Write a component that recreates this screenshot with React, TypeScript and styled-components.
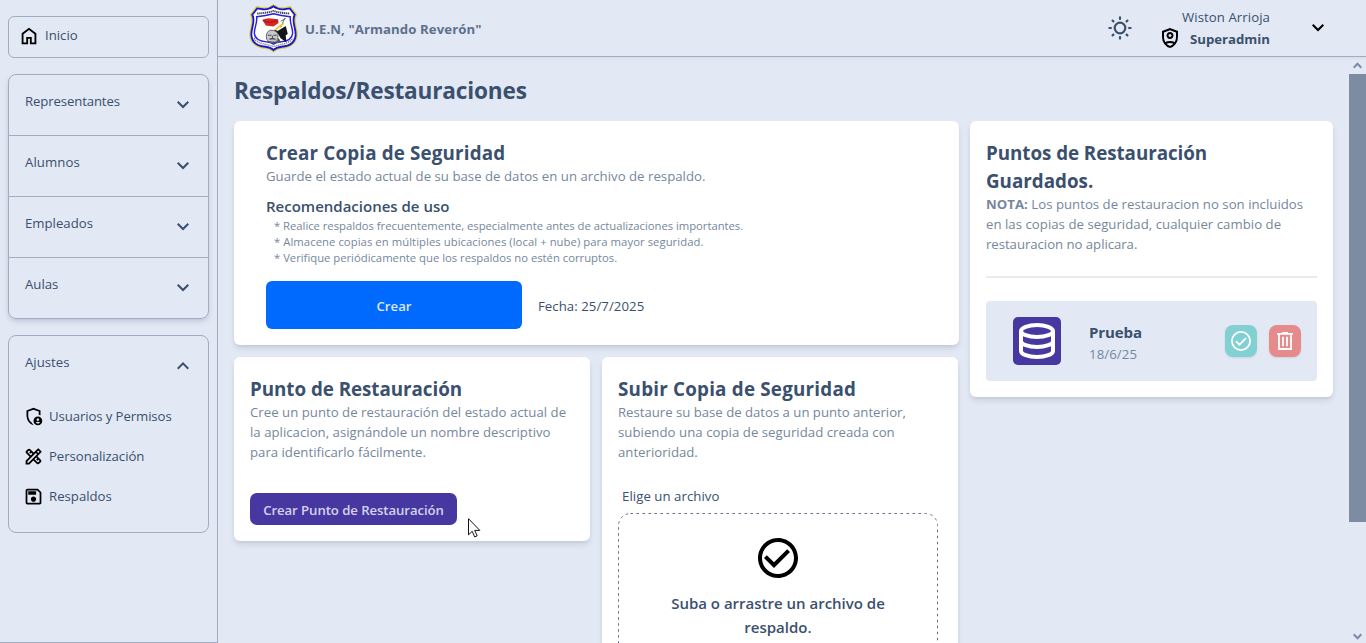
import React from "react";
import styled, { createGlobalStyle } from "styled-components";
import { MdCheckCircleOutline, MdOutlineDesignServices, MdOutlineSave } from "react-icons/md";

const color = {
  page: "#e2e8f4",
  ink: "#3a506e",
  muted: "#76879c",
  line: "#a3adc2",
  indigo: "#4638a0",
  blue: "#006aff",
};

const GlobalStyle = createGlobalStyle`
  * { box-sizing: border-box; margin: 0; padding: 0; }
  body {
    background: ${color.page};
    color: ${color.ink};
    font-family: "Open Sans", "Noto Sans", sans-serif;
    font-size: 13.2px;
    line-height: 20px;
    overflow: hidden;
  }
  svg { display: block; flex: none; }
  button { font: inherit; border: 0; }
`;

type Tracking = { $track?: number };

const Shell = styled.div`
  display: flex;
  height: 643px;
  position: relative;
`;

const Sidebar = styled.nav`
  display: flex;
  flex-direction: column;
  gap: 16px;
  width: 218px;
  padding: 16px 8px 0;
  border-right: 1px solid ${color.line};
  border-bottom: 1px solid ${color.line};
`;

const NavLabel = styled.span<Tracking>`
  letter-spacing: ${(p) => p.$track ?? 0}px;
  white-space: nowrap;
`;

const HomeLink = styled.a`
  display: flex;
  gap: 5px;
  height: 42px;
  padding: 8px 9px;
  border: 1px solid ${color.line};
  border-radius: 6px;
`;

const NavGroup = styled.div<{ $raised?: boolean }>`
  border: 1px solid ${color.line};
  border-radius: 8px;
  overflow: hidden;
  box-shadow: ${(p) => (p.$raised ? "0 3px 6px -1px rgba(40,50,80,.16), 0 2px 4px -2px rgba(40,50,80,.1)" : "none")};
`;

const NavRow = styled.div`
  display: flex;
  justify-content: space-between;
  height: 60px;
  padding: 16px 13px 0 16px;
  svg { margin-top: 2px; }
  & + & { height: 61px; border-top: 1px solid ${color.line}; }
`;

const SubList = styled.ul`
  list-style: none;
  padding: 0 14px 16px;
`;

const SubItem = styled.li`
  display: flex;
  align-items: center;
  gap: 5px;
  height: 40px;
  svg { color: #000; }
`;

const Column = styled.div`
  flex: 1;
  display: flex;
  flex-direction: column;
  min-width: 0;
`;

const Header = styled.header`
  display: flex;
  align-items: center;
  height: 57px;
  padding: 0 36px 0 31px;
  border-bottom: 1px solid ${color.line};
  box-shadow: 0 1px 3px rgba(40, 50, 80, 0.08);
`;

const School = styled.strong<Tracking>`
  margin: 2px auto 0 7px;
  color: #5d718d;
  letter-spacing: ${(p) => p.$track ?? 0}px;
`;

const User = styled.div`
  display: flex;
  flex-direction: column;
  align-items: flex-end;
  margin: 0 36px 0 26px;
  line-height: 22px;
`;

const Role = styled.div`
  display: flex;
  gap: 8px;
  height: 22px;
  svg { margin-top: -2px; }
`;

const Scroller = styled.div`
  flex: 1;
  display: flex;
  min-height: 0;
  overflow: hidden;
`;

const Main = styled.main`
  flex: 1;
  padding: 16px;
  overflow: hidden;
`;

const PageTitle = styled.h1<Tracking>`
  padding-top: 2px;
  margin-bottom: 14px;
  font-size: 22.6px;
  line-height: 32px;
  letter-spacing: ${(p) => p.$track ?? 0}px;
`;

const Columns = styled.div`
  display: flex;
  align-items: flex-start;
  gap: 11px;
`;

const Primary = styled.div`
  display: grid;
  grid-template-columns: 356px 356px;
  gap: 12px;
  width: 725px;
  align-items: start;
`;

const Card = styled.section<{ $wide?: boolean; $side?: boolean }>`
  grid-column: ${(p) => (p.$wide ? "1 / -1" : "auto")};
  width: ${(p) => (p.$wide ? "725px" : p.$side ? "363px" : "auto")};
  padding: ${(p) => (p.$wide ? "16px 32px" : "16px")};
  background: #fff;
  border-radius: 6px;
  box-shadow: 0 4px 6px -1px rgba(30, 40, 70, 0.12), 0 2px 4px -2px rgba(30, 40, 70, 0.12);
`;

const CardTitle = styled.h2<Tracking>`
  padding-top: 2px;
  margin-bottom: -1px;
  font-size: 18.8px;
  line-height: 28px;
  letter-spacing: ${(p) => p.$track ?? 0}px;
`;

const CardText = styled.p`
  color: ${color.muted};
`;

const Line = styled.span<Tracking>`
  display: block;
  white-space: nowrap;
  letter-spacing: ${(p) => p.$track ?? 0}px;
`;

const Subtitle = styled.h3`
  margin-top: 8px;
  font-size: 15px;
  font-weight: 600;
  line-height: 24px;
`;

const Tips = styled.ul`
  list-style: none;
  padding-left: 8px;
  color: ${color.muted};
  font-size: 11.3px;
  line-height: 16px;
`;

const Action = styled.div`
  display: flex;
  align-items: center;
  gap: 16px;
  margin-top: 15px;
`;

const ActionDate = styled.span`
  padding-top: 2px;
  letter-spacing: 0.06px;
`;

const CreateButton = styled.button`
  width: 256px;
  height: 48px;
  padding-top: 2px;
  border-radius: 6px;
  background: ${color.blue};
  color: #dbe7fb;
  font-weight: 600;
`;

const PointButton = styled.button`
  width: 207px;
  height: 32px;
  margin-top: 31px;
  padding-top: 2px;
  border-radius: 7px;
  background: ${color.indigo};
  color: #d5d3ee;
  font-weight: 600;
  white-space: nowrap;
  letter-spacing: -0.08px;
`;

const FileLabel = styled.label`
  display: block;
  margin: 24px 0 7px 4px;
  letter-spacing: 0.06px;
`;

const DropZone = styled.div`
  position: relative;
  display: flex;
  flex-direction: column;
  align-items: center;
  width: 320px;
  height: 190px;
  padding-top: 21px;
`;

const DropOutline = styled.svg`
  position: absolute;
  inset: 0;
`;

const DropText = styled.p`
  margin-top: 9px;
  font-size: 15px;
  font-weight: 600;
  line-height: 24px;
  text-align: center;
`;

const Divider = styled.hr`
  margin: 22px 0 23px;
  border: 0;
  height: 2px;
  background: #e9eaf2;
`;

const Point = styled.div`
  display: flex;
  align-items: center;
  height: 80px;
  padding: 0 16px 0 27px;
  border-radius: 4px;
  background: ${color.page};
`;

const PointBadge = styled.div`
  display: grid;
  place-items: center;
  width: 48px;
  height: 48px;
  border-radius: 5px;
  background: ${color.indigo};
`;

const PointInfo = styled.div`
  flex: 1;
  margin-left: 28px;
  padding-top: 2px;
  strong { display: block; font-size: 15px; line-height: 24px; letter-spacing: -0.1px; }
  span { display: block; color: ${color.muted}; line-height: 20px; letter-spacing: 0.1px; }
`;

const IconButton = styled.button<{ $tone: string }>`
  display: grid;
  place-items: center;
  width: 32px;
  height: 32px;
  margin-left: 12px;
  border-radius: 8px;
  background: ${(p) => p.$tone};
  box-shadow: 0 1px 2px rgba(30, 40, 70, 0.1);
  &:first-of-type { margin-left: 0; }
`;

const Scrollbar = styled.div`
  display: flex;
  flex-direction: column;
  align-items: center;
  justify-content: space-between;
  width: 17px;
  padding-bottom: 3px;
`;

const Thumb = styled.div`
  width: 17px;
  height: 448px;
  margin-bottom: auto;
  background: #7d8ca3;
`;

const ScrollArrow = styled.div`
  display: grid;
  place-items: center;
  height: 17px;
`;

const Cursor = styled.svg`
  position: absolute;
  left: 468px;
  top: 518px;
`;

const Chevron = ({ up, fill = color.ink }: { up?: boolean; fill?: string }) => (
  <svg width="24" height="24" viewBox="0 -960 960 960" fill={fill}>
    <path
      d={
        up
          ? "M480-528 296-344l-56-56 240-240 240 240-56 56-184-184Z"
          : "M480-344 240-584l56-56 184 184 184-184 56 56-240 240Z"
      }
    />
  </svg>
);

const HomeIcon = () => (
  <svg width="22" height="22" viewBox="0 -960 960 960" fill="#000">
    <path d="M240-200h120v-240h240v240h120v-360L480-740 240-560v360Zm-80 80v-480l320-240 320 240v480H520v-240h-80v240H160Z" />
  </svg>
);

const AdminIcon = () => (
  <svg width="21" height="21" viewBox="0 -960 960 960" fill="#000">
    <path d="M680-280q25 0 42.500-17.500T740-340q0-25-17.500-42.500T680-400q-25 0-42.500 17.500T620-340q0 25 17.500 42.500T680-280Zm0 120q31 0 57-14.500t42-38.500q-22-13-47-20t-52-7q-27 0-52 7t-47 20q16 24 42 38.500t57 14.500ZM480-80q-139-35-229.500-159.500T160-516v-244l320-120 320 120v227q-19-8-39-14.500t-41-9.500v-147l-240-90-240 90v188q0 47 12.500 94t35 89.500Q310-290 342-254t71 60q11 32 29 61t41 52q-1 0-1.500.500t-1.500.500Zm200 0q-83 0-141.500-58.500T480-280q0-83 58.500-141.500T680-480q83 0 141.500 58.500T880-280q0 83-58.500 141.500T680-80Z" />
  </svg>
);

const ShieldPerson = () => (
  <svg width="24" height="24" viewBox="0 -960 960 960" fill="#000">
    <path d="M480-440q-58 0-99-41t-41-99q0-58 41-99t99-41q58 0 99 41t41 99q0 58-41 99t-99 41Zm0-80q25 0 42.500-17.500T540-580q0-25-17.500-42.500T480-640q-25 0-42.500 17.500T420-580q0 25 17.500 42.500T480-520Zm0 440q-139-35-229.500-159.500T160-516v-244l320-120 320 120v244q0 152-90.500 276.500T480-80Zm0-715-240 90v189q0 54 15 105t41 96q42-21 88-33t96-12q50 0 96 12t88 33q26-45 41-96t15-105v-189l-240-90Zm0 515q-36 0-70 8t-65 22q29 30 63 52t72 34q38-12 72-34t63-52q-31-14-65-22t-70-8Z" />
  </svg>
);

const SunIcon = () => (
  <svg width="24" height="24" viewBox="-12 -12 24 24" fill="none" stroke={color.ink} strokeWidth="2.2">
    <circle r="5.300" />
    <path
      strokeLinecap="round"
      d="M0-10.600v1.500M0 10.600v-1.500M-10.600 0h1.500M10.600 0h-1.500M-7.400-7.400l.8.8M7.400-7.400l-.8.8M-7.400 7.400l.8-.8M7.400 7.400l-.8-.8"
    />
  </svg>
);

const DatabaseIcon = () => (
  <svg width="36" height="36" viewBox="0 0 36 36" fill="none" stroke="#fff" strokeWidth="4">
    <ellipse cx="18" cy="8" rx="16" ry="6" />
    <path d="M2 8v20c0 3.300 7.200 6 16 6s16-2.700 16-6V8" />
    <path d="M2 18c0 3.300 7.200 6 16 6s16-2.700 16-6" />
  </svg>
);

const RestoreIcon = () => (
  <svg width="20" height="20" viewBox="0 0 20 20" fill="none" stroke="#fff" strokeWidth="1.8">
    <circle cx="10" cy="10" r="9.100" />
    <path d="M5 10.300l3.500 3.400 6.500-6.600" />
  </svg>
);

const TrashIcon = () => (
  <svg width="16" height="18" viewBox="0 0 16 18" fill="none" stroke="#fff" strokeWidth="1.8">
    <path d="M0 1.900h16M5 .9h6M2 2v15h12V2M6 4.800v9.400M10 4.800v9.400" />
  </svg>
);

const Crest = () => (
  <svg width="49" height="49" viewBox="0.500 0 47 48">
    <path
      d="M24 .8c3.500 3 8 3.800 13 2.600l3.500-.6 6 7.700c-4 6 1 13 .5 20-.5 8-7 12-14.500 12.700-3.800.4-6.500 1.500-8.500 3.600-2-2.100-4.700-3.200-8.500-3.600-7.500-.7-14-4.700-14.500-12.700-.5-7 4.500-14 .5-20l6-7.700 3.500.6c5 1.200 9.500.4 13-2.600Z"
      fill="#fff"
      stroke="#d9d23c"
      strokeWidth="1.400"
    />
    <path
      d="M24 2.300c3.500 2.700 8 3.500 13 2.400l3-.4 4.800 6.200c-3.600 6 1.300 13 .9 20-.5 7-6 10.700-13.700 11.400-3.500.4-6 1.300-8 3.200-2-1.900-4.500-2.800-8-3.200-7.700-.7-13.200-4.400-13.700-11.400-.4-7 4.500-14 .9-20L8 4.300l3 .4c5 1.100 9.500.3 13-2.400Z"
      fill="#fff"
      stroke="#1d14cc"
      strokeWidth="1.800"
    />
    <path
      d="M7.500 12.500c5.500-.6 11-1.500 16.500-3 5.500 1.500 11 2.400 16.500 3-1 6 2.700 11 2.200 16.500-.5 5.500-5 7.500-11.700 8.100-3 .3-5 .8-7 2.200-2-1.400-4-1.900-7-2.200-6.700-.6-11.200-2.600-11.700-8.100-.5-5.500 3.200-10.500 2.200-16.500Z"
      fill="#fff"
      stroke="#2a22d8"
      strokeWidth="1.400"
    />
    <path d="M8 9.300c6-.2 11-1 16-2.500 5 1.500 10 2.300 16 2.500" fill="none" stroke="#454553" strokeWidth="1.900" strokeDasharray="1.300 .6" />
    <path d="M5 33.500c4 6 12 5.500 19 8.300 7-2.800 15-2.300 19-8.300" fill="none" stroke="#777784" strokeWidth="1.500" strokeDasharray="1.100 .9" />
    <path d="M13 15.500l6-1.500 9.500 1 .5 3.500-5 3.500-7.500-1Z" fill="#d92522" />
    <path d="M13.500 16.500l7 1.500 7.500-1.500" fill="none" stroke="#7c1518" strokeWidth=".7" />
    <path d="M31 17l5-3M35 14l-4 9" stroke="#33333a" strokeWidth=".7" />
    <path d="M26 25l8-6" stroke="#e8c51d" strokeWidth="1.600" />
    <path d="M25 25l3 1.500 8-5 2 8-2 1 .5 7-5.500-4-3-5-3-1Z" fill="#141419" />
    <path d="M17 32c0-5 3-7 7-6 4 .7 5 4 4 8-1 3-2 4-5 4s-6-2-6-6Z" fill="#c9c9cc" stroke="#55555a" strokeWidth=".9" />
    <path d="M18.500 30.500h3.500m2 0h3M20 34.500c2-1 4-1 6 0M23 31v2M18 37l9 .5" stroke="#44444a" strokeWidth="1" />
    <path d="M29 33l2.500 5-5 .5Z" fill="#55555b" />
  </svg>
);

const sections: [string, number][] = [
  ["Representantes", -0.13],
  ["Alumnos", 0.08],
  ["Empleados", 0],
  ["Aulas", 0],
];

export default function App() {
  return (
    <Shell>
      <GlobalStyle />
      <Sidebar>
        <HomeLink>
          <HomeIcon />
          <NavLabel>Inicio</NavLabel>
        </HomeLink>
        <NavGroup $raised>
          {sections.map(([name, track]) => (
            <NavRow key={name}>
              <NavLabel $track={track}>{name}</NavLabel>
              <Chevron />
            </NavRow>
          ))}
        </NavGroup>
        <NavGroup>
          <NavRow>
            <NavLabel>Ajustes</NavLabel>
            <Chevron up />
          </NavRow>
          <SubList>
            <SubItem>
              <AdminIcon />
              <NavLabel $track={-0.1}>Usuarios y Permisos</NavLabel>
            </SubItem>
            <SubItem>
              <MdOutlineDesignServices size={21} />
              <NavLabel $track={-0.06}>Personalización</NavLabel>
            </SubItem>
            <SubItem>
              <MdOutlineSave size={21} />
              <NavLabel>Respaldos</NavLabel>
            </SubItem>
          </SubList>
        </NavGroup>
      </Sidebar>

      <Column>
        <Header>
          <Crest />
          <School $track={0.09}>U.E.N, "Armando Reverón"</School>
          <SunIcon />
          <User>
            <NavLabel $track={0.07}>Wiston Arrioja</NavLabel>
            <Role>
              <ShieldPerson />
              <strong>Superadmin</strong>
            </Role>
          </User>
          <Chevron fill="#000" />
        </Header>

        <Scroller>
          <Main>
            <PageTitle $track={-0.17}>Respaldos/Restauraciones</PageTitle>
            <Columns>
              <Primary>
                <Card $wide>
                  <CardTitle $track={0.16}>Crear Copia de Seguridad</CardTitle>
                  <CardText>
                    <Line $track={0.02}>Guarde el estado actual de su base de datos en un archivo de respaldo.</Line>
                  </CardText>
                  <Subtitle>Recomendaciones de uso</Subtitle>
                  <Tips>
                    <li><Line $track={-0.035}>* Realice respaldos frecuentemente, especialmente antes de actualizaciones importantes.</Line></li>
                    <li><Line $track={0.05}>* Almacene copias en múltiples ubicaciones (local + nube) para mayor seguridad.</Line></li>
                    <li><Line $track={-0.015}>* Verifique periódicamente que los respaldos no estén corruptos.</Line></li>
                  </Tips>
                  <Action>
                    <CreateButton>Crear</CreateButton>
                    <ActionDate>Fecha: 25/7/2025</ActionDate>
                  </Action>
                </Card>

                <Card>
                  <CardTitle $track={-0.04}>Punto de Restauración</CardTitle>
                  <CardText>
                    <Line $track={0.02}>Cree un punto de restauración del estado actual de</Line>
                    <Line $track={0.02}>la aplicacion, asignándole un nombre descriptivo</Line>
                    <Line>para identificarlo fácilmente.</Line>
                  </CardText>
                  <PointButton>Crear Punto de Restauración</PointButton>
                </Card>

                <Card>
                  <CardTitle $track={0.22}>Subir Copia de Seguridad</CardTitle>
                  <CardText>
                    <Line $track={-0.02}>Restaure su base de datos a un punto anterior,</Line>
                    <Line $track={0.04}>subiendo una copia de seguridad creada con</Line>
                    <Line>anterioridad.</Line>
                  </CardText>
                  <FileLabel>Elige un archivo</FileLabel>
                  <DropZone>
                    <DropOutline width="320" height="190" fill="none" stroke="#5f6f88" strokeDasharray="2.500 3.500">
                      <rect x=".5" y=".5" width="319" height="189" rx="12" />
                    </DropOutline>
                    <MdCheckCircleOutline size={48} color="#000" />
                    <DropText>
                      <Line>Suba o arrastre un archivo de</Line>
                      <Line>respaldo.</Line>
                    </DropText>
                  </DropZone>
                </Card>
              </Primary>

              <Card $side>
                <CardTitle>
                  <Line $track={-0.05}>Puntos de Restauración</Line>
                  <Line>Guardados.</Line>
                </CardTitle>
                <CardText>
                  <Line $track={0.02}><b>NOTA:</b> Los puntos de restauracion no son incluidos</Line>
                  <Line $track={0.03}>en las copias de seguridad, cualquier cambio de</Line>
                  <Line $track={-0.04}>restauracion no aplicara.</Line>
                </CardText>
                <Divider />
                <Point>
                  <PointBadge><DatabaseIcon /></PointBadge>
                  <PointInfo>
                    <strong>Prueba</strong>
                    <span>18/6/25</span>
                  </PointInfo>
                  <IconButton $tone="#82d0d1"><RestoreIcon /></IconButton>
                  <IconButton $tone="#e68b8b"><TrashIcon /></IconButton>
                </Point>
              </Card>
            </Columns>
          </Main>
          <Scrollbar>
            <ScrollArrow>
              <svg width="9" height="7" viewBox="0 0 9 7" fill="none" stroke="#7d8ca3" strokeWidth="2"><path d="M.7 5.700l3.800-4 3.800 4" /></svg>
            </ScrollArrow>
            <Thumb />
            <svg width="9" height="7" viewBox="0 0 9 7" fill="none" stroke="#7d8ca3" strokeWidth="2"><path d="M.7 1.300l3.800 4 3.800-4" /></svg>
          </Scrollbar>
        </Scroller>
      </Column>

      <Cursor width="13" height="20" viewBox="0 0 13 20">
        <path d="M.5.700v16.100l3.700-3.500 2.500 5.600 2.500-1.100-2.500-5.400h5.100Z" fill="#fff" stroke="#111" strokeWidth="1" />
      </Cursor>
    </Shell>
  );
}
